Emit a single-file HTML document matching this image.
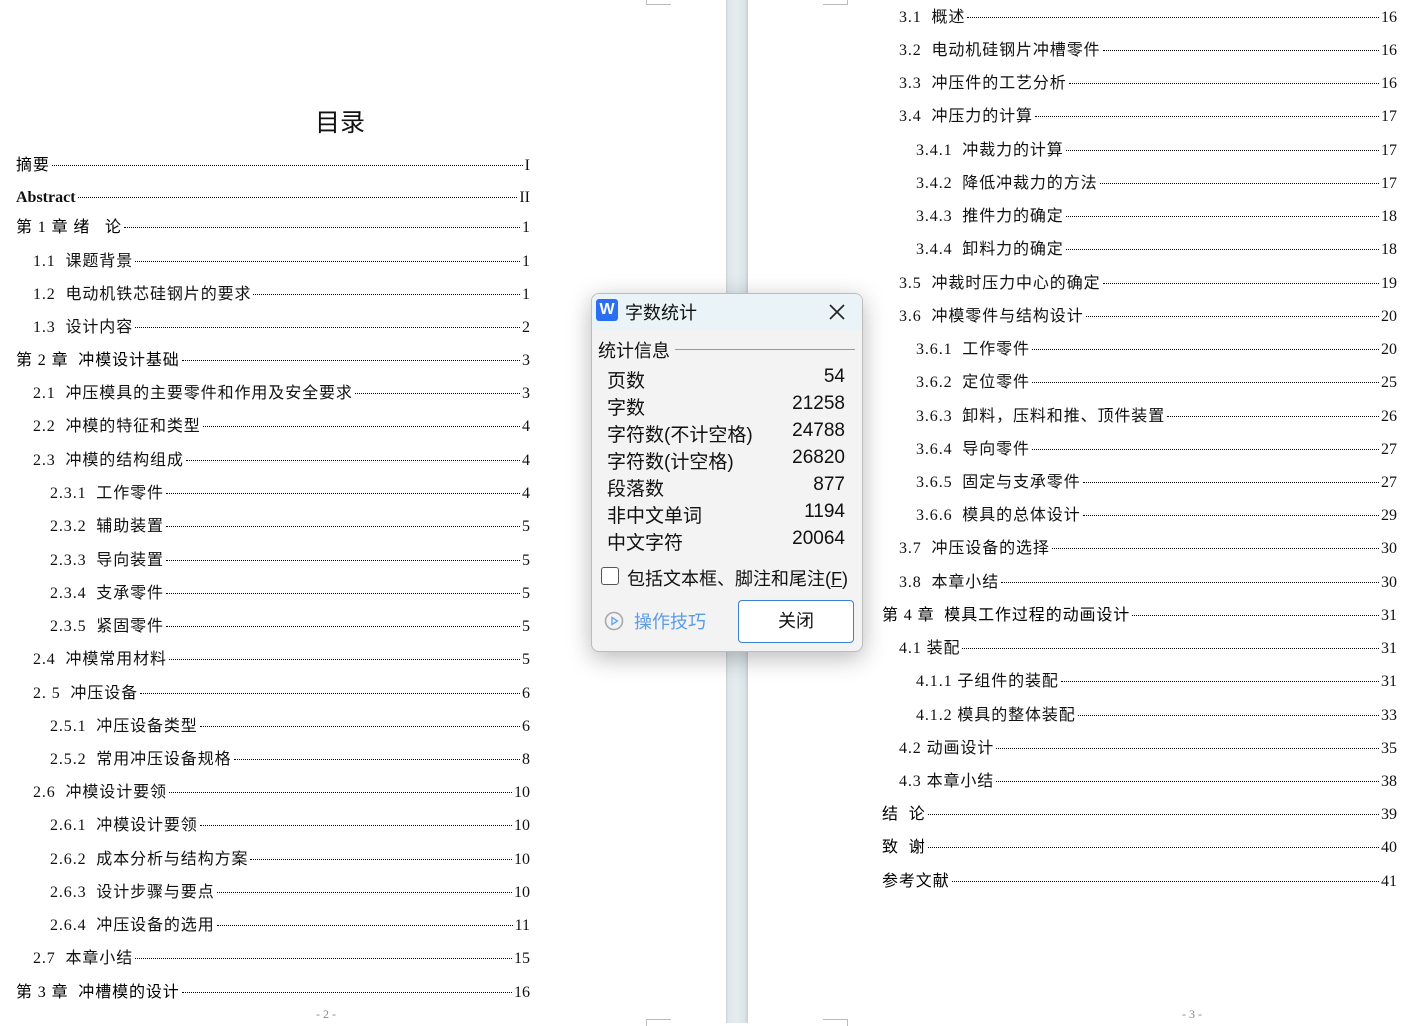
<!DOCTYPE html>
<html><head><meta charset="utf-8"><style>
html,body{margin:0;padding:0;}
body{width:1425px;height:1023px;position:relative;overflow:hidden;background:#fff;font-family:"Liberation Serif","Noto Sans CJK SC",serif;color:#111;}
.gap{position:absolute;left:726px;top:0;width:22px;height:1023px;background:linear-gradient(90deg,#c9cfd2 0,#dfe7ea 2px,#e4ecef 50%,#dbe3e6 19px,#c7cdd0 22px);}
.r{position:absolute;height:22px;display:flex;align-items:baseline;font-size:16px;line-height:22px;white-space:nowrap;margin-top:2px;}
.r .t{font-family:"Liberation Serif","Noto Sans CJK SC",serif;letter-spacing:0.9px;}
.r.b .t{color:#000;}
.r.ab .t{font-weight:bold;letter-spacing:0;}
.r .d{flex:1;border-bottom:1.4px dotted #000;margin:0 2px;position:relative;top:-4px;}
.r .n{font-family:"Liberation Serif",serif;}
.mk{position:absolute;border-color:#bbb;border-style:solid;border-width:0;}
.pn{position:absolute;font-size:12px;color:#888;font-family:"Liberation Serif",serif;}
.dlg{position:absolute;left:591px;top:293px;width:270px;height:357px;background:#f3f3f3;border:1px solid #bcbcbc;border-radius:8px;box-shadow:0 6px 24px rgba(0,0,0,.28);font-family:"Liberation Sans","Noto Sans CJK SC",sans-serif;overflow:hidden;}
.dlg .hd{height:36px;background:#eaf4f8;position:relative;}
.dlg .ic{position:absolute;left:4px;top:5px;width:22px;height:22px;background:#2a6ff2;border-radius:3px;color:#fff;font-weight:bold;font-size:16px;text-align:center;line-height:22px;}
.dlg .tt{position:absolute;left:33px;top:5px;font-size:18px;color:#111;}
.row{position:absolute;left:15px;width:238px;font-size:19px;display:flex;justify-content:space-between;color:#111;}
</style></head><body>
<div class="gap"></div>
<div class="mk" style="left:646px;top:0;width:24px;height:4px;border-left-width:1px;border-bottom-width:1px"></div>
<div class="mk" style="left:823px;top:0;width:24px;height:4px;border-right-width:1px;border-bottom-width:1px"></div>
<div class="mk" style="left:646px;top:1019px;width:24px;height:6px;border-left-width:1px;border-top-width:1px"></div>
<div class="mk" style="left:823px;top:1019px;width:24px;height:6px;border-right-width:1px;border-top-width:1px"></div>
<div style="position:absolute;left:315px;top:103px;font-size:25px;font-family:'Noto Sans CJK SC',sans-serif;">目录</div>
<div class="pn" style="left:316px;top:1007px">- 2 -</div>
<div class="pn" style="left:1182px;top:1007px">- 3 -</div>

<div class="r b" style="left:16px;width:514px;top:153px"><span class="t">摘要</span><span class="d"></span><span class="n">I</span></div>
<div class="r ab" style="left:16px;width:514px;top:185px"><span class="t">Abstract</span><span class="d"></span><span class="n">II</span></div>
<div class="r b" style="left:16px;width:514px;top:215px"><span class="t">第 1 章 绪&nbsp;&nbsp;&nbsp;论</span><span class="d"></span><span class="n">1</span></div>
<div class="r" style="left:33px;width:497px;top:249px"><span class="t">1.1&nbsp; 课题背景</span><span class="d"></span><span class="n">1</span></div>
<div class="r" style="left:33px;width:497px;top:282px"><span class="t">1.2&nbsp; 电动机铁芯硅钢片的要求</span><span class="d"></span><span class="n">1</span></div>
<div class="r" style="left:33px;width:497px;top:315px"><span class="t">1.3&nbsp; 设计内容</span><span class="d"></span><span class="n">2</span></div>
<div class="r b" style="left:16px;width:514px;top:348px"><span class="t">第 2 章&nbsp; 冲模设计基础</span><span class="d"></span><span class="n">3</span></div>
<div class="r" style="left:33px;width:497px;top:381px"><span class="t">2.1&nbsp; 冲压模具的主要零件和作用及安全要求</span><span class="d"></span><span class="n">3</span></div>
<div class="r" style="left:33px;width:497px;top:414px"><span class="t">2.2&nbsp; 冲模的特征和类型</span><span class="d"></span><span class="n">4</span></div>
<div class="r" style="left:33px;width:497px;top:448px"><span class="t">2.3&nbsp; 冲模的结构组成</span><span class="d"></span><span class="n">4</span></div>
<div class="r" style="left:50px;width:480px;top:481px"><span class="t">2.3.1&nbsp; 工作零件</span><span class="d"></span><span class="n">4</span></div>
<div class="r" style="left:50px;width:480px;top:514px"><span class="t">2.3.2&nbsp; 辅助装置</span><span class="d"></span><span class="n">5</span></div>
<div class="r" style="left:50px;width:480px;top:548px"><span class="t">2.3.3&nbsp; 导向装置</span><span class="d"></span><span class="n">5</span></div>
<div class="r" style="left:50px;width:480px;top:581px"><span class="t">2.3.4&nbsp; 支承零件</span><span class="d"></span><span class="n">5</span></div>
<div class="r" style="left:50px;width:480px;top:614px"><span class="t">2.3.5&nbsp; 紧固零件</span><span class="d"></span><span class="n">5</span></div>
<div class="r" style="left:33px;width:497px;top:647px"><span class="t">2.4&nbsp; 冲模常用材料</span><span class="d"></span><span class="n">5</span></div>
<div class="r" style="left:33px;width:497px;top:681px"><span class="t">2. 5&nbsp; 冲压设备</span><span class="d"></span><span class="n">6</span></div>
<div class="r" style="left:50px;width:480px;top:714px"><span class="t">2.5.1&nbsp; 冲压设备类型</span><span class="d"></span><span class="n">6</span></div>
<div class="r" style="left:50px;width:480px;top:747px"><span class="t">2.5.2&nbsp; 常用冲压设备规格</span><span class="d"></span><span class="n">8</span></div>
<div class="r" style="left:33px;width:497px;top:780px"><span class="t">2.6&nbsp; 冲模设计要领</span><span class="d"></span><span class="n">10</span></div>
<div class="r" style="left:50px;width:480px;top:813px"><span class="t">2.6.1&nbsp; 冲模设计要领</span><span class="d"></span><span class="n">10</span></div>
<div class="r" style="left:50px;width:480px;top:847px"><span class="t">2.6.2&nbsp; 成本分析与结构方案</span><span class="d"></span><span class="n">10</span></div>
<div class="r" style="left:50px;width:480px;top:880px"><span class="t">2.6.3&nbsp; 设计步骤与要点</span><span class="d"></span><span class="n">10</span></div>
<div class="r" style="left:50px;width:480px;top:913px"><span class="t">2.6.4&nbsp; 冲压设备的选用</span><span class="d"></span><span class="n">11</span></div>
<div class="r" style="left:33px;width:497px;top:946px"><span class="t">2.7&nbsp; 本章小结</span><span class="d"></span><span class="n">15</span></div>
<div class="r b" style="left:16px;width:514px;top:980px"><span class="t">第 3 章&nbsp; 冲槽模的设计</span><span class="d"></span><span class="n">16</span></div>

<div class="r" style="left:899px;width:498px;top:5px"><span class="t">3.1&nbsp; 概述</span><span class="d"></span><span class="n">16</span></div>
<div class="r" style="left:899px;width:498px;top:38px"><span class="t">3.2&nbsp; 电动机硅钢片冲槽零件</span><span class="d"></span><span class="n">16</span></div>
<div class="r" style="left:899px;width:498px;top:71px"><span class="t">3.3&nbsp; 冲压件的工艺分析</span><span class="d"></span><span class="n">16</span></div>
<div class="r" style="left:899px;width:498px;top:104px"><span class="t">3.4&nbsp; 冲压力的计算</span><span class="d"></span><span class="n">17</span></div>
<div class="r" style="left:916px;width:481px;top:138px"><span class="t">3.4.1&nbsp; 冲裁力的计算</span><span class="d"></span><span class="n">17</span></div>
<div class="r" style="left:916px;width:481px;top:171px"><span class="t">3.4.2&nbsp; 降低冲裁力的方法</span><span class="d"></span><span class="n">17</span></div>
<div class="r" style="left:916px;width:481px;top:204px"><span class="t">3.4.3&nbsp; 推件力的确定</span><span class="d"></span><span class="n">18</span></div>
<div class="r" style="left:916px;width:481px;top:237px"><span class="t">3.4.4&nbsp; 卸料力的确定</span><span class="d"></span><span class="n">18</span></div>
<div class="r" style="left:899px;width:498px;top:271px"><span class="t">3.5&nbsp; 冲裁时压力中心的确定</span><span class="d"></span><span class="n">19</span></div>
<div class="r" style="left:899px;width:498px;top:304px"><span class="t">3.6&nbsp; 冲模零件与结构设计</span><span class="d"></span><span class="n">20</span></div>
<div class="r" style="left:916px;width:481px;top:337px"><span class="t">3.6.1&nbsp; 工作零件</span><span class="d"></span><span class="n">20</span></div>
<div class="r" style="left:916px;width:481px;top:370px"><span class="t">3.6.2&nbsp; 定位零件</span><span class="d"></span><span class="n">25</span></div>
<div class="r" style="left:916px;width:481px;top:404px"><span class="t">3.6.3&nbsp; 卸料，压料和推、顶件装置</span><span class="d"></span><span class="n">26</span></div>
<div class="r" style="left:916px;width:481px;top:437px"><span class="t">3.6.4&nbsp; 导向零件</span><span class="d"></span><span class="n">27</span></div>
<div class="r" style="left:916px;width:481px;top:470px"><span class="t">3.6.5&nbsp; 固定与支承零件</span><span class="d"></span><span class="n">27</span></div>
<div class="r" style="left:916px;width:481px;top:503px"><span class="t">3.6.6&nbsp; 模具的总体设计</span><span class="d"></span><span class="n">29</span></div>
<div class="r" style="left:899px;width:498px;top:536px"><span class="t">3.7&nbsp; 冲压设备的选择</span><span class="d"></span><span class="n">30</span></div>
<div class="r" style="left:899px;width:498px;top:570px"><span class="t">3.8&nbsp; 本章小结</span><span class="d"></span><span class="n">30</span></div>
<div class="r b" style="left:882px;width:515px;top:603px"><span class="t">第 4 章&nbsp; 模具工作过程的动画设计</span><span class="d"></span><span class="n">31</span></div>
<div class="r" style="left:899px;width:498px;top:636px"><span class="t">4.1 装配</span><span class="d"></span><span class="n">31</span></div>
<div class="r" style="left:916px;width:481px;top:669px"><span class="t">4.1.1 子组件的装配</span><span class="d"></span><span class="n">31</span></div>
<div class="r" style="left:916px;width:481px;top:703px"><span class="t">4.1.2 模具的整体装配</span><span class="d"></span><span class="n">33</span></div>
<div class="r" style="left:899px;width:498px;top:736px"><span class="t">4.2 动画设计</span><span class="d"></span><span class="n">35</span></div>
<div class="r" style="left:899px;width:498px;top:769px"><span class="t">4.3 本章小结</span><span class="d"></span><span class="n">38</span></div>
<div class="r b" style="left:882px;width:515px;top:802px"><span class="t">结&nbsp; 论</span><span class="d"></span><span class="n">39</span></div>
<div class="r b" style="left:882px;width:515px;top:835px"><span class="t">致&nbsp; 谢</span><span class="d"></span><span class="n">40</span></div>
<div class="r b" style="left:882px;width:515px;top:869px"><span class="t">参考文献</span><span class="d"></span><span class="n">41</span></div>

<div class="dlg">
  <div class="hd"><div class="ic">W</div><div class="tt">字数统计</div>
    <svg style="position:absolute;left:236px;top:9px" width="18" height="18" viewBox="0 0 18 18"><path d="M2 2L16 16M16 2L2 16" stroke="#222" stroke-width="1.6"/></svg></div>
  <div style="position:absolute;left:6px;top:43px;font-size:18px;color:#111">统计信息</div>
  <div style="position:absolute;left:83px;top:55px;width:180px;border-top:1px solid #999"></div>
  <div class="row" style="top:72px"><span>页数</span><span>54</span></div>
  <div class="row" style="top:99px"><span>字数</span><span>21258</span></div>
  <div class="row" style="top:126px"><span>字符数(不计空格)</span><span>24788</span></div>
  <div class="row" style="top:153px"><span>字符数(计空格)</span><span>26820</span></div>
  <div class="row" style="top:180px"><span>段落数</span><span>877</span></div>
  <div class="row" style="top:207px"><span>非中文单词</span><span>1194</span></div>
  <div class="row" style="top:234px"><span>中文字符</span><span>20064</span></div>
  <div style="position:absolute;left:9px;top:273px;width:16px;height:16px;border:1px solid #555;border-radius:3px;background:#fff"></div>
  <div style="position:absolute;left:35px;top:271px;font-size:18px;color:#111">包括文本框、脚注和尾注(<u>F</u>)</div>
  <svg style="position:absolute;left:12px;top:317px" width="20" height="20" viewBox="0 0 20 20"><circle cx="10" cy="10" r="8.5" fill="none" stroke="#aaa" stroke-width="1.6"/><path d="M8 6.5L13.5 10L8 13.5Z" fill="none" stroke="#6aa6ee" stroke-width="1.4"/></svg>
  <div style="position:absolute;left:42px;top:314px;font-size:18px;color:#5b9ce8">操作技巧</div>
  <div style="position:absolute;left:146px;top:306px;width:114px;height:41px;border:1px solid #3c7fd0;border-radius:4px;background:#fff;font-size:18px;text-align:center;line-height:41px;color:#111">关闭</div>
</div>
</body></html>
